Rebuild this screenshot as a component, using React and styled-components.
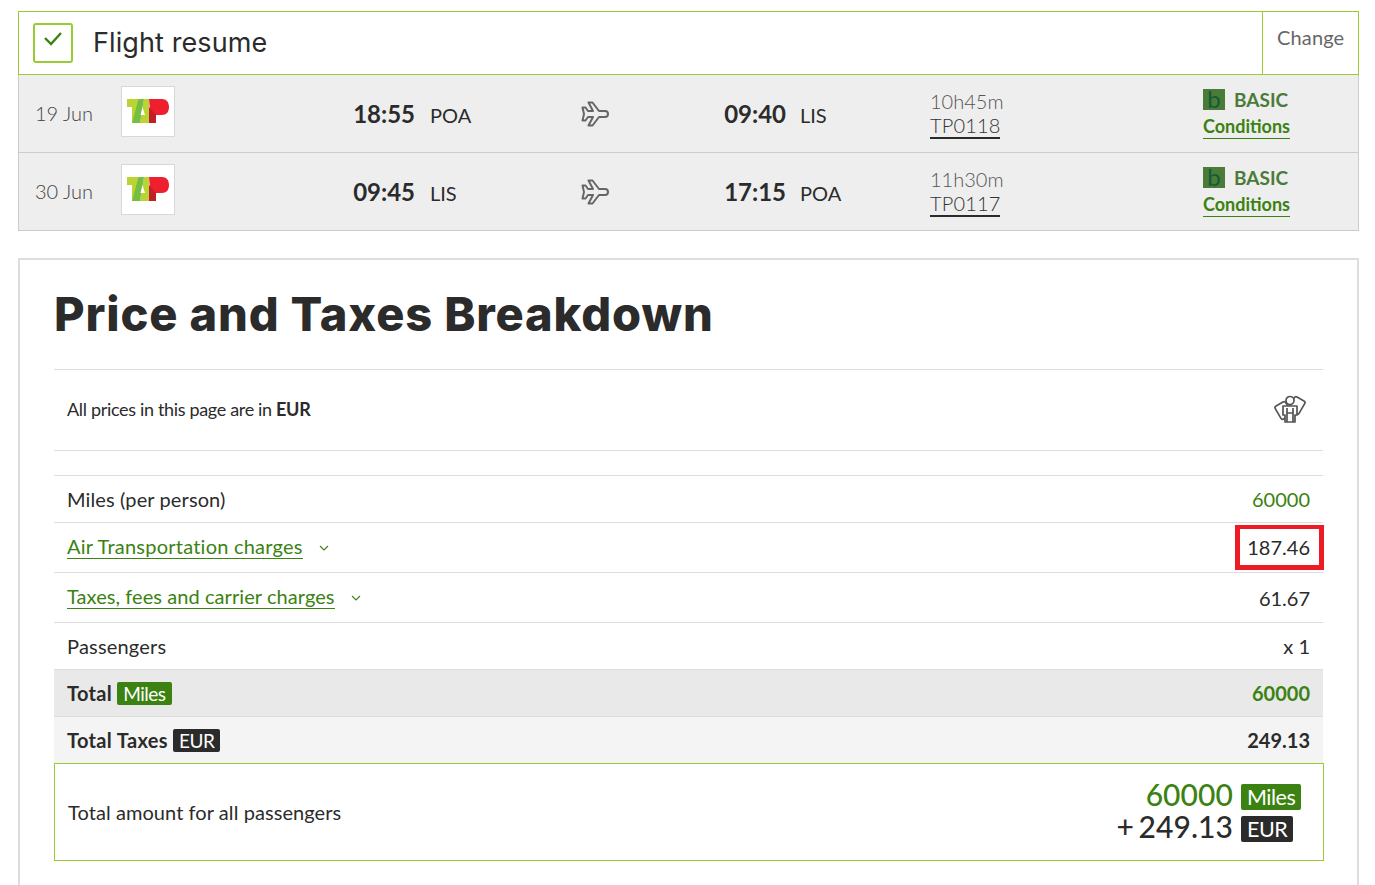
import styled, { createGlobalStyle } from "styled-components";

const GlobalStyle = createGlobalStyle`
  html, body {
    margin: 0;
    padding: 0;
    background: #fff;
    color: #2b2b2b;
    font-family: Lato, "Liberation Sans", sans-serif;
  }
`;

const Page = styled.div`
  box-sizing: border-box;
  width: 1375px;
  height: 885px;
  overflow: hidden;
  padding: 11px 16px 0 18px;
`;

const ResumeHeader = styled.div`
  display: flex;
  align-items: stretch;
  height: 64px;
  box-sizing: border-box;
  border: 1px solid #9c3;
`;

const ResumeTitle = styled.div`
  flex: 1;
  display: flex;
  align-items: center;
  gap: 20px;
  padding-left: 14px;
  font-family: Inter, "Open Sans", sans-serif;
  font-size: 27px;
  letter-spacing: 0.1px;
  line-height: 60px;
  color: #2b2b2b;
`;

const CheckBox = styled.div`
  width: 40px;
  height: 40px;
  box-sizing: border-box;
  border: 2px solid #9c3;
  border-radius: 3px;
  display: flex;
  justify-content: center;
  padding-top: 6px;
`;

const ChangeCell = styled.div`
  width: 96px;
  box-sizing: border-box;
  border-left: 1px solid #9c3;
  padding: 13px 0 0 14px;
  font-size: 20px;
  letter-spacing: 0.15px;
  color: #666;
`;

const FlightRow = styled.div`
  display: grid;
  grid-template-columns: 86px 54px 240px 166px 28px 177px 144px 273px 1fr;
  box-sizing: border-box;
  padding-left: 16px;
  background: #eee;
  border: 1px solid #ccc;
  border-top: ${(props) => (props.first ? "none" : "1px solid #ccc")};
  margin-top: ${(props) => (props.first ? "0" : "-1px")};
  height: ${(props) => (props.first ? "78px" : "79px")};
  align-items: center;
`;

const DateCell = styled.div`
  font-size: 20px;
  font-weight: 300;
  color: #444;
  margin-bottom: 2px;
`;

const LogoBox = styled.div`
  width: 54px;
  height: 51px;
  box-sizing: border-box;
  background: #fff;
  border: 1px solid #d8d8d8;
  display: flex;
  align-items: center;
  justify-content: center;
  margin-bottom: 5px;
`;

const Time = styled.div`
  font-size: 24px;
  font-weight: 700;
  text-align: right;
  color: #2b2b2b;
`;

const Airport = styled.div`
  font-size: 20px;
  padding: 2px 0 0 ${(props) => props.pad || 14}px;
  color: #2b2b2b;
`;

const FlightInfo = styled.div`
  font-size: 20px;
  font-weight: 300;
  line-height: 26px;
  color: #555;
  margin-bottom: 1px;
`;

const FlightNumber = styled.div`
  width: fit-content;
  color: #333;
  border-bottom: 2px solid #2b2b2b;
  line-height: 23px;
  letter-spacing: 0.15px;
`;

const FareInfo = styled.div`
  font-size: 19px;
  line-height: 26px;
  margin-bottom: 2px;
`;

const FareName = styled.div`
  display: flex;
  align-items: center;
  gap: 9px;
  font-weight: 700;
  color: #4a7c38;
`;

const ConditionsLink = styled.a`
  display: block;
  width: fit-content;
  margin-top: 2px;
  font-size: 18px;
  font-weight: 700;
  line-height: 23px;
  color: #3b8212;
  border-bottom: 1px solid #3b8212;
`;

const FareBadge = styled.span`
  width: 22px;
  height: 21px;
  background: #4a7c38;
  color: #145a3a;
  font-size: 24px;
  font-weight: 400;
  line-height: 20px;
  text-align: center;
`;

const Panel = styled.div`
  margin-top: 27px;
  box-sizing: border-box;
  height: 700px;
  border: 2px solid #ddd;
  padding: 0 34px;
`;

const Heading = styled.h1`
  margin: 0;
  height: 109px;
  font-family: Inter, "Open Sans", sans-serif;
  font-size: 47px;
  font-weight: 800;
  line-height: 107px;
  letter-spacing: 0.85px;
  color: #2b2b2b;
`;

const Notice = styled.div`
  display: flex;
  align-items: center;
  justify-content: space-between;
  height: 82px;
  box-sizing: border-box;
  padding: 0 17px 2px 13px;
  border-top: 1px solid #ddd;
  border-bottom: 1px solid #ddd;
  font-size: 18px;
  letter-spacing: -0.33px;
  margin-bottom: 24px;

  b {
    font-weight: 700;
  }
`;

const Row = styled.div`
  display: flex;
  align-items: center;
  justify-content: space-between;
  height: ${(props) => props.h || 47}px;
  box-sizing: border-box;
  padding: 0 13px;
  border-top: 1px solid #ddd;
  font-size: 20px;
  font-weight: ${(props) => (props.bold ? 700 : 400)};
  background: ${(props) => props.bg || "#fff"};
`;

const RowLabel = styled.div`
  display: flex;
  align-items: center;
  gap: 5px;
  letter-spacing: ${(props) => props.spread || 0.12}px;
`;

const ChargeLink = styled.a`
  color: #3b8212;
  border-bottom: 1px solid #3b8212;
  line-height: 24px;
  margin: 0 ${(props) => props.gap}px 2px 0;
  letter-spacing: ${(props) => props.spread}px;
`;

const GreenValue = styled.span`
  color: #3b8212;
`;

const HighlightWrap = styled.span`
  position: relative;
  display: block;
  width: 62px;
  height: 0;
`;

const Highlighted = styled.span`
  position: absolute;
  right: -14px;
  top: -23px;
  width: 89px;
  height: 45px;
  box-sizing: border-box;
  border: 5px solid #ed1c24;
  border-top-width: 4px;
  display: flex;
  align-items: center;
  justify-content: flex-end;
  padding-right: 9px;
`;

const Tag = styled.span`
  display: inline-block;
  padding: 0 6px;
  border-radius: 2px;
  color: #fff;
  font-weight: 400;
  font-size: ${(props) => props.size || 19}px;
  line-height: ${(props) => props.lh || 23}px;
  letter-spacing: -0.5px;
  background: ${(props) => (props.dark ? "#2b2b2b" : "#3b8212")};
`;

const TotalBox = styled.div`
  display: flex;
  align-items: center;
  justify-content: space-between;
  height: 98px;
  margin-right: -1px;
  box-sizing: border-box;
  border: 1px solid #9c3;
  padding: 0 22px 0 13px;
  font-size: 20px;
  letter-spacing: 0.07px;
  background: #fff;
`;

const Amounts = styled.div`
  display: grid;
  grid-template-columns: auto 60px;
  column-gap: 8px;
  align-items: center;
  justify-items: end;
  font-size: 30px;
  font-weight: 500;
  line-height: 32px;
  word-spacing: -3px;
  margin-bottom: 5px;

  span:nth-child(even) {
    justify-self: start;
    margin-top: 6px;
  }
`;

const TapLogo = () => (
  <svg width="42" height="24" viewBox="0 0 42 24">
    <path d="M0 0H12V8H0Z" fill="#b9d433" />
    <path d="M5 8H12V24H5Z" fill="#b9d433" />
    <path d="M13 24L17 0H22V24Z" fill="#b9d433" />
    <path d="M11.500 0H17L13 24H5Z" fill="#76bd43" />
    <path d="M15.500 8L18 16H13.500Z" fill="#fff" />
    <path d="M22 0H35C39.500 0 42 3 42 8C42 13 39.500 16 35 16H29V24H24Z" fill="#ee2030" />
    <path d="M22 8L29 16V24H22Z" fill="#c0202a" />
  </svg>
);

const PlaneIcon = () => (
  <svg width="28" height="26" viewBox="0 0 28 26">
    <path
      d="M1.500 6.500H4.500L7 10H12L7.500 1.500H11.500L18 10H24C26 10 27 11.500 27 13C27 14.500 26 16 24 16H18L11.500 24.500H7.500L12 16H7L4.500 19.500H1.500L3 13Z"
      fill="none"
      stroke="#666"
      strokeWidth="2"
      strokeLinejoin="round"
    />
  </svg>
);

const PeopleIcon = () => (
  <svg width="32" height="30" viewBox="0 0 32 30" fill="none" stroke="#555" strokeWidth="1.700" strokeLinejoin="round">
    <rect x="17" y="4" width="12" height="15" rx="2" transform="rotate(30 23 11)" />
    <rect x="3" y="9" width="12" height="15" rx="2" transform="rotate(-30 9 16)" />
    <path d="M9 12H23V21H21V28H11V21H9Z" fill="#fff" />
    <circle cx="16" cy="6.500" r="4" fill="#fff" />
    <path d="M13 14V28M19 14V28M13 19H19" />
  </svg>
);

const Chevron = () => (
  <svg width="10" height="6" viewBox="0 0 10 6">
    <path d="M1 1L5 5L9 1" fill="none" stroke="#3b8212" strokeWidth="1.100" />
  </svg>
);

const flights = [
  { date: "19 Jun", dep: "18:55", from: "POA", arr: "09:40", to: "LIS", duration: "10h45m", number: "TP0118" },
  { date: "30 Jun", dep: "09:45", from: "LIS", arr: "17:15", to: "POA", duration: "11h30m", number: "TP0117" },
];

const App = () => {
  return (
    <Page>
      <GlobalStyle />
      <ResumeHeader>
        <ResumeTitle>
          <CheckBox>
            <svg width="20" height="15" viewBox="0 0 20 15">
              <path d="M2 7L8 13L18 2" fill="none" stroke="#3b8212" strokeWidth="2.400" />
            </svg>
          </CheckBox>
          <span>Flight resume</span>
        </ResumeTitle>
        <ChangeCell>Change</ChangeCell>
      </ResumeHeader>

      {flights.map((flight, index) => (
        <FlightRow key={flight.number} first={index === 0}>
          <DateCell>{flight.date}</DateCell>
          <LogoBox>
            <TapLogo />
          </LogoBox>
          <Time>{flight.dep}</Time>
          <Airport pad={15}>{flight.from}</Airport>
          <PlaneIcon />
          <Time>{flight.arr}</Time>
          <Airport>{flight.to}</Airport>
          <FlightInfo>
            {flight.duration}
            <FlightNumber>{flight.number}</FlightNumber>
          </FlightInfo>
          <FareInfo>
            <FareName>
              <FareBadge>b</FareBadge>
              BASIC
            </FareName>
            <ConditionsLink>Conditions</ConditionsLink>
          </FareInfo>
        </FlightRow>
      ))}

      <Panel>
        <Heading>Price and Taxes Breakdown</Heading>
        <Notice>
          <span>
            All prices in this page are in <b>EUR</b>
          </span>
          <PeopleIcon />
        </Notice>
        <Row>
          <RowLabel>Miles (per person)</RowLabel>
          <GreenValue>60000</GreenValue>
        </Row>
        <Row h={50}>
          <RowLabel>
            <ChargeLink gap={11} spread={0.23}>Air Transportation charges</ChargeLink>
            <Chevron />
          </RowLabel>
          <HighlightWrap>
            <Highlighted>187.46</Highlighted>
          </HighlightWrap>
        </Row>
        <Row h={50}>
          <RowLabel>
            <ChargeLink gap={11} spread={0.07}>Taxes, fees and carrier charges</ChargeLink>
            <Chevron />
          </RowLabel>
          <span>61.67</span>
        </Row>
        <Row>
          <RowLabel spread={0.2}>Passengers</RowLabel>
          <span>x 1</span>
        </Row>
        <Row bold bg="#e9e9e9">
          <RowLabel spread={0.35}>
            Total <Tag>Miles</Tag>
          </RowLabel>
          <GreenValue>60000</GreenValue>
        </Row>
        <Row bold bg="#f4f4f4">
          <RowLabel spread={0.35}>
            Total Taxes <Tag dark>EUR</Tag>
          </RowLabel>
          <span>249.13</span>
        </Row>
        <TotalBox>
          <span>Total amount for all passengers</span>
          <Amounts>
            <GreenValue>60000</GreenValue>
            <Tag size={21.5} lh={26}>Miles</Tag>
            <span>+ 249.13</span>
            <Tag dark size={21.5} lh={26}>EUR</Tag>
          </Amounts>
        </TotalBox>
      </Panel>
    </Page>
  );
};

export default App;
